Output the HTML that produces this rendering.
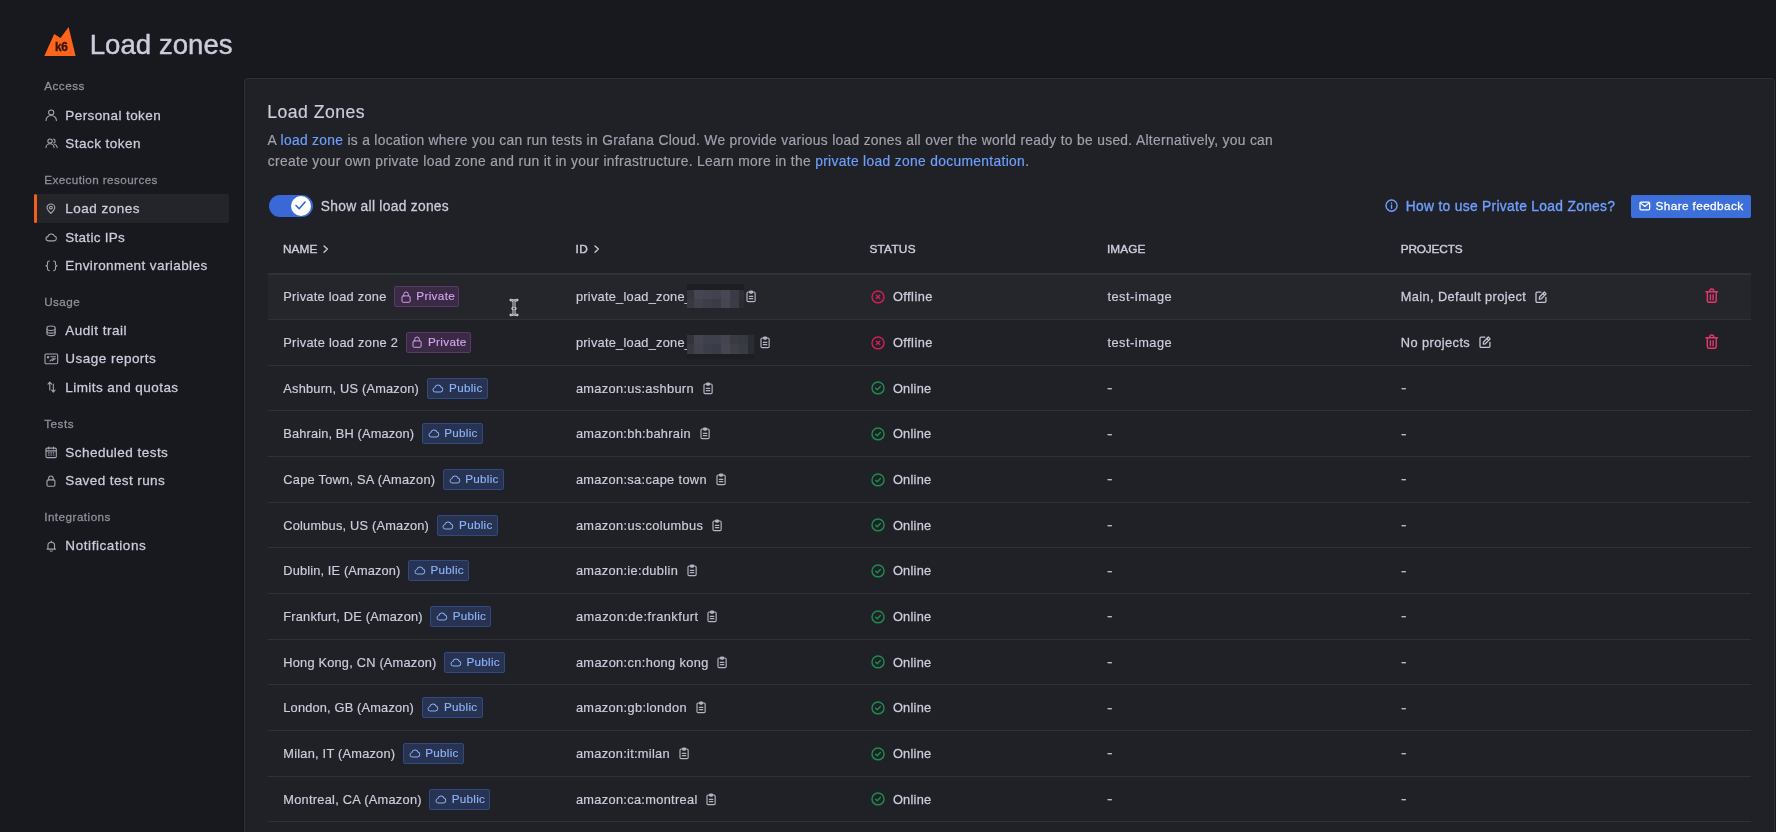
<!DOCTYPE html>
<html lang="en"><head><meta charset="utf-8"><title>Load zones</title><style>
html,body{margin:0;padding:0}
body{width:1776px;height:832px;overflow:hidden;background:#18191e;position:relative;font-family:'Liberation Sans', sans-serif;}
.wrap{position:absolute;left:0;top:0;width:1776px;height:832px;will-change:transform}
.t{position:absolute;white-space:pre;line-height:20px;font-family:'Liberation Sans', sans-serif;margin:0;padding:0;border:0;background:none;font-weight:400;text-decoration:none;display:block}
a{text-decoration:none}
.s0{-webkit-text-stroke:0.18px currentColor}
.lk{-webkit-text-stroke:0.36px currentColor}
.s1{-webkit-text-stroke:0.18px currentColor}
.s2{-webkit-text-stroke:0.45px currentColor}
.m{-webkit-text-stroke:0.26px currentColor}
.bt{-webkit-text-stroke:0.15px currentColor}
.h{-webkit-text-stroke:0.4px currentColor}
.b{position:absolute}
.i{position:absolute;overflow:visible}
</style></head>
<body>
<div class="wrap">
<main class="panel-wrap">
<section class="intro">
<div class="b panel" style="left:244.00px;top:78.00px;width:1531.00px;height:760.00px;background:#202126;border:1px solid #2e3035;border-radius:3px 3px 0 0;box-shadow:0 0 2px rgba(0,0,0,.35);box-sizing:border-box"></div>
<h2 id="t17" class="t s1" style="left:267.20px;top:102.00px;font-size:17.6px;color:#ccccdc;letter-spacing:0.506px;">Load Zones</h2>
<p class="t s0" style="left:267.60px;top:130.50px;font-size:13.8px;letter-spacing:0.321px;color:#a0a1ad">A <a href="#" style="color:#6e9fff">load zone</a> is a location where you can run tests in Grafana Cloud. We provide various load zones all over the world ready to be used. Alternatively, you can</p>
<p class="t s0" style="left:267.80px;top:151.50px;font-size:13.8px;letter-spacing:0.341px;color:#a0a1ad">create your own private load zone and run it in your infrastructure. Learn more in the <a href="#" style="color:#6e9fff">private load zone documentation</a>.</p>
</section>
<div class="toolbar">
<div class="b" style="left:268.50px;top:194.70px;width:44.50px;height:22.80px;background:#3a68d6;border-radius:12px"></div>
<div class="b" style="left:290.60px;top:195.90px;width:20.00px;height:20.00px;background:#fff;border-radius:50%"></div>
<svg class="i" style="left:296.00px;top:202.40px;color:#3462d0" width="9.10" height="6.70" viewBox="2.800 3.600 8.600 6.200" preserveAspectRatio="none" fill="none" stroke="#3462d0" stroke-width="1.6" stroke-linecap="round" stroke-linejoin="round"><path vector-effect="non-scaling-stroke" d="M2.800 6.800l3 3 5.600-6.200"/></svg>
<svg class="i" style="left:1385.60px;top:200.40px;color:#6e9fff" width="11.10" height="11.20" viewBox="2.500 2.500 19.000 19.000" preserveAspectRatio="none" fill="none" stroke="#6e9fff" stroke-width="1.4" stroke-linecap="round" stroke-linejoin="round"><circle vector-effect="non-scaling-stroke" cx="12" cy="12" r="9.500"/><path vector-effect="non-scaling-stroke" d="M12 11.200v5.300"/><path vector-effect="non-scaling-stroke" d="M12 7.600v.3"/></svg>
<div class="b" style="left:1631.00px;top:194.60px;width:120.20px;height:23.00px;background:#3d6fda;border-radius:2px"></div>
<svg class="i" style="left:1640.42px;top:202.12px;color:#ffffff" width="9.65" height="7.85" viewBox="2.500 4.500 19.000 15.000" preserveAspectRatio="none" fill="none" stroke="#ffffff" stroke-width="1.25" stroke-linecap="round" stroke-linejoin="round"><rect vector-effect="non-scaling-stroke" x="2.500" y="4.500" width="19" height="15" rx="2"/><path vector-effect="non-scaling-stroke" d="M3.500 6.200l8.500 6.800 8.500-6.800"/></svg>
<label id="t18" class="t m" style="left:320.80px;top:196.50px;font-size:13.8px;color:#ccccdc;letter-spacing:0.288px;">Show all load zones</label>
<a href="#" id="t19" class="t lk" style="left:1405.80px;top:196.50px;font-size:13.8px;color:#6e9fff;letter-spacing:0.311px;">How to use Private Load Zones?</a>
<button type="button" id="t20" class="t m" style="left:1655.50px;top:196.00px;font-size:11.8px;color:#ffffff;letter-spacing:0.383px;">Share feedback</button>
</div>
<div class="table" role="table">
<div class="thead" role="row">
<svg class="i" style="left:324.45px;top:246.35px;color:#ccccdc" width="3.40" height="6.20" viewBox="9.000 5.500 6.500 13.000" preserveAspectRatio="none" fill="none" stroke="#ccccdc" stroke-width="1.3" stroke-linecap="round" stroke-linejoin="round"><path vector-effect="non-scaling-stroke" d="M9 5.500l6.500 6.500-6.500 6.500"/></svg>
<svg class="i" style="left:594.85px;top:246.35px;color:#ccccdc" width="3.40" height="6.20" viewBox="9.000 5.500 6.500 13.000" preserveAspectRatio="none" fill="none" stroke="#ccccdc" stroke-width="1.3" stroke-linecap="round" stroke-linejoin="round"><path vector-effect="non-scaling-stroke" d="M9 5.500l6.500 6.500-6.500 6.500"/></svg>
<div class="b" style="left:268.00px;top:273.20px;width:1483.00px;height:1.50px;background:#303238"></div>
<span id="t21" class="t h" style="left:282.90px;top:239.00px;font-size:11.8px;color:#ccccdc;letter-spacing:0.127px;">NAME</span>
<span id="t22" class="t h" style="left:575.60px;top:239.00px;font-size:11.8px;color:#ccccdc;letter-spacing:0.294px;">ID</span>
<span id="t23" class="t h" style="left:869.40px;top:239.00px;font-size:11.8px;color:#ccccdc;letter-spacing:0.267px;">STATUS</span>
<span id="t24" class="t h" style="left:1106.90px;top:239.00px;font-size:11.8px;color:#ccccdc;letter-spacing:0.114px;">IMAGE</span>
<span id="t25" class="t h" style="left:1400.70px;top:239.00px;font-size:11.8px;color:#ccccdc;letter-spacing:-0.142px;">PROJECTS</span>
</div>
<div class="tr" role="row">
<div class="b" style="left:268.00px;top:274.50px;width:1483.00px;height:44.67px;background:#25262c"></div>
<div class="b" style="left:268.00px;top:318.97px;width:1483.00px;height:1.00px;background:#2f3136"></div>
<div class="b" style="left:394.20px;top:286.40px;width:65.20px;height:21.00px;background:#3a2a46;border:1px solid #563b66;border-radius:2px;box-sizing:border-box"></div>
<svg class="i" style="left:401.60px;top:291.60px;color:#cf9fe8" width="8.10" height="10.30" viewBox="4.500 3.000 15.000 18.500" preserveAspectRatio="none" fill="none" stroke="#cf9fe8" stroke-width="1.0" stroke-linecap="round" stroke-linejoin="round"><rect vector-effect="non-scaling-stroke" x="4.500" y="10" width="15" height="11.500" rx="2"/><path vector-effect="non-scaling-stroke" d="M7.800 10V7.200a4.200 4.200 0 0 1 8.400 0V10"/></svg>
<div class="b mos" style="left:0;top:0;filter:blur(0.6px);z-index:3"><div class="b" style="left:687.0px;top:289.60px;width:7.0px;height:9.35px;background:rgb(53, 54, 61)"></div><div class="b" style="left:693.8px;top:289.60px;width:9.3px;height:9.35px;background:rgb(69, 70, 81)"></div><div class="b" style="left:702.9px;top:289.60px;width:9.3px;height:9.35px;background:rgb(67, 68, 79)"></div><div class="b" style="left:712.0px;top:289.60px;width:9.3px;height:9.35px;background:rgb(65, 66, 77)"></div><div class="b" style="left:721.1px;top:289.60px;width:9.3px;height:9.35px;background:rgb(71, 72, 83)"></div><div class="b" style="left:730.2px;top:289.60px;width:9.3px;height:9.35px;background:rgb(57, 60, 70)"></div><div class="b" style="left:739.3px;top:289.60px;width:4.7px;height:9.35px;background:rgb(47, 48, 55)"></div><div class="b" style="left:687.0px;top:298.75px;width:7.0px;height:9.35px;background:rgb(55, 57, 65)"></div><div class="b" style="left:693.8px;top:298.75px;width:9.3px;height:9.35px;background:rgb(63, 65, 75)"></div><div class="b" style="left:702.9px;top:298.75px;width:9.3px;height:9.35px;background:rgb(59, 61, 71)"></div><div class="b" style="left:712.0px;top:298.75px;width:9.3px;height:9.35px;background:rgb(57, 60, 70)"></div><div class="b" style="left:721.1px;top:298.75px;width:9.3px;height:9.35px;background:rgb(69, 70, 81)"></div><div class="b" style="left:730.2px;top:298.75px;width:9.3px;height:9.35px;background:rgb(59, 61, 70)"></div><div class="b" style="left:739.3px;top:298.75px;width:4.7px;height:9.35px;background:rgb(43, 44, 51)"></div><div class="b" style="left:687.0px;top:284.40px;width:56.8px;height:5.2px;background:#1d1e22"></div></div>
<svg class="i" style="left:747.38px;top:291.37px;color:#b4b5c3" width="8.15" height="10.65" viewBox="5.000 2.600 14.000 19.400" preserveAspectRatio="none" fill="none" stroke="#b4b5c3" stroke-width="1.15" stroke-linecap="round" stroke-linejoin="round"><path vector-effect="non-scaling-stroke" d="M8.800 4.500H7a2 2 0 0 0-2 2V20a2 2 0 0 0 2 2h10a2 2 0 0 0 2-2V6.500a2 2 0 0 0-2-2h-1.800"/><rect vector-effect="non-scaling-stroke" x="9.300" y="2.600" width="5.400" height="3.800" rx="1.600" fill="currentColor"/><path vector-effect="non-scaling-stroke" d="M9 12.400h6M9 16.600h6"/></svg>
<svg class="i" style="left:871.83px;top:290.98px;color:#cc2055" width="12.05" height="11.85" viewBox="2.500 2.500 19.000 19.000" preserveAspectRatio="none" fill="none" stroke="#cc2055" stroke-width="1.45" stroke-linecap="round" stroke-linejoin="round"><circle vector-effect="non-scaling-stroke" cx="12" cy="12" r="9.500"/><path vector-effect="non-scaling-stroke" d="M9.300 9.300l5.400 5.400M14.700 9.300l-5.400 5.400"/></svg>
<svg class="i" style="left:1535.65px;top:291.75px;color:#c3c4d2" width="10.10" height="10.40" viewBox="3.000 2.900 18.300 18.100" preserveAspectRatio="none" fill="none" stroke="#c3c4d2" stroke-width="1.3" stroke-linecap="round" stroke-linejoin="round"><path vector-effect="non-scaling-stroke" d="M21 12.500V19a2 2 0 0 1-2 2H5a2 2 0 0 1-2-2V5a2 2 0 0 1 2-2h6.800"/><path vector-effect="non-scaling-stroke" d="M9 15.200l.5-3.700 8.600-8.600 3.200 3.200-8.600 8.600z"/><path vector-effect="non-scaling-stroke" d="M15.400 5.600l3.200 3.200"/></svg>
<svg class="i" style="left:1705.72px;top:289.02px;color:#e0386a" width="11.55" height="13.25" viewBox="2.500 3.500 19.000 18.500" preserveAspectRatio="none" fill="none" stroke="#e0386a" stroke-width="1.45" stroke-linecap="round" stroke-linejoin="round"><path vector-effect="non-scaling-stroke" d="M2.500 7.200h19"/><path vector-effect="non-scaling-stroke" d="M8.600 7.200a3.400 3.700 0 0 1 6.800 0"/><path vector-effect="non-scaling-stroke" d="M4.700 7.200v12.300a2.500 2.500 0 0 0 2.500 2.500h9.600a2.500 2.500 0 0 0 2.500-2.500V7.200"/><path vector-effect="non-scaling-stroke" d="M9.800 11.500v7M14.200 11.500v7"/></svg>
<span id="t26" class="t s0" style="left:283.30px;top:286.50px;font-size:12.8px;color:#ccccdc;letter-spacing:0.259px;">Private load zone</span>
<span id="t27" class="t bt" style="left:416.30px;top:285.50px;font-size:11.7px;color:#d2a4ea;letter-spacing:0.344px;">Private</span>
<span id="t28" class="t s0" style="left:575.90px;top:286.50px;font-size:12.8px;color:#ccccdc;letter-spacing:0.255px;">private_load_zone_</span>
<span id="t29" class="t m" style="left:892.90px;top:286.50px;font-size:12.8px;color:#ccccdc;letter-spacing:0.462px;">Offline</span>
<span id="t30" class="t s0" style="left:1107.40px;top:286.50px;font-size:12.8px;color:#ccccdc;letter-spacing:0.505px;">test-image</span>
<span id="t31" class="t m" style="left:1400.80px;top:286.50px;font-size:12.8px;color:#ccccdc;letter-spacing:0.383px;">Main, Default project</span>
</div>
<div class="tr" role="row">
<div class="b" style="left:268.00px;top:364.63px;width:1483.00px;height:1.00px;background:#2f3136"></div>
<div class="b" style="left:405.80px;top:332.07px;width:65.20px;height:21.00px;background:#3a2a46;border:1px solid #563b66;border-radius:2px;box-sizing:border-box"></div>
<svg class="i" style="left:413.20px;top:337.27px;color:#cf9fe8" width="8.10" height="10.30" viewBox="4.500 3.000 15.000 18.500" preserveAspectRatio="none" fill="none" stroke="#cf9fe8" stroke-width="1.0" stroke-linecap="round" stroke-linejoin="round"><rect vector-effect="non-scaling-stroke" x="4.500" y="10" width="15" height="11.500" rx="2"/><path vector-effect="non-scaling-stroke" d="M7.800 10V7.200a4.200 4.200 0 0 1 8.400 0V10"/></svg>
<div class="b mos" style="left:0;top:0;filter:blur(0.6px);z-index:3"><div class="b" style="left:687.0px;top:335.27px;width:7.0px;height:9.35px;background:rgb(51, 52, 59)"></div><div class="b" style="left:693.8px;top:335.27px;width:9.3px;height:9.35px;background:rgb(67, 68, 79)"></div><div class="b" style="left:702.9px;top:335.27px;width:9.3px;height:9.35px;background:rgb(63, 64, 75)"></div><div class="b" style="left:712.0px;top:335.27px;width:9.3px;height:9.35px;background:rgb(63, 64, 74)"></div><div class="b" style="left:721.1px;top:335.27px;width:9.3px;height:9.35px;background:rgb(67, 68, 79)"></div><div class="b" style="left:730.2px;top:335.27px;width:9.3px;height:9.35px;background:rgb(57, 58, 66)"></div><div class="b" style="left:739.3px;top:335.27px;width:9.3px;height:9.35px;background:rgb(55, 57, 65)"></div><div class="b" style="left:748.4px;top:335.27px;width:5.7px;height:9.35px;background:rgb(43, 44, 50)"></div><div class="b" style="left:687.0px;top:344.42px;width:7.0px;height:9.35px;background:rgb(55, 57, 65)"></div><div class="b" style="left:693.8px;top:344.42px;width:9.3px;height:9.35px;background:rgb(65, 66, 77)"></div><div class="b" style="left:702.9px;top:344.42px;width:9.3px;height:9.35px;background:rgb(59, 61, 71)"></div><div class="b" style="left:712.0px;top:344.42px;width:9.3px;height:9.35px;background:rgb(57, 60, 70)"></div><div class="b" style="left:721.1px;top:344.42px;width:9.3px;height:9.35px;background:rgb(69, 70, 81)"></div><div class="b" style="left:730.2px;top:344.42px;width:9.3px;height:9.35px;background:rgb(61, 63, 73)"></div><div class="b" style="left:739.3px;top:344.42px;width:9.3px;height:9.35px;background:rgb(57, 59, 68)"></div><div class="b" style="left:748.4px;top:344.42px;width:5.7px;height:9.35px;background:rgb(43, 44, 50)"></div><div class="b" style="left:687.0px;top:353.57px;width:66.9px;height:5.2px;background:#1d1e22"></div></div>
<svg class="i" style="left:760.78px;top:337.04px;color:#b4b5c3" width="8.15" height="10.65" viewBox="5.000 2.600 14.000 19.400" preserveAspectRatio="none" fill="none" stroke="#b4b5c3" stroke-width="1.15" stroke-linecap="round" stroke-linejoin="round"><path vector-effect="non-scaling-stroke" d="M8.800 4.500H7a2 2 0 0 0-2 2V20a2 2 0 0 0 2 2h10a2 2 0 0 0 2-2V6.500a2 2 0 0 0-2-2h-1.800"/><rect vector-effect="non-scaling-stroke" x="9.300" y="2.600" width="5.400" height="3.800" rx="1.600" fill="currentColor"/><path vector-effect="non-scaling-stroke" d="M9 12.400h6M9 16.600h6"/></svg>
<svg class="i" style="left:871.83px;top:336.64px;color:#cc2055" width="12.05" height="11.85" viewBox="2.500 2.500 19.000 19.000" preserveAspectRatio="none" fill="none" stroke="#cc2055" stroke-width="1.45" stroke-linecap="round" stroke-linejoin="round"><circle vector-effect="non-scaling-stroke" cx="12" cy="12" r="9.500"/><path vector-effect="non-scaling-stroke" d="M9.300 9.300l5.400 5.400M14.700 9.300l-5.400 5.400"/></svg>
<svg class="i" style="left:1479.65px;top:337.42px;color:#c3c4d2" width="10.10" height="10.40" viewBox="3.000 2.900 18.300 18.100" preserveAspectRatio="none" fill="none" stroke="#c3c4d2" stroke-width="1.3" stroke-linecap="round" stroke-linejoin="round"><path vector-effect="non-scaling-stroke" d="M21 12.500V19a2 2 0 0 1-2 2H5a2 2 0 0 1-2-2V5a2 2 0 0 1 2-2h6.800"/><path vector-effect="non-scaling-stroke" d="M9 15.200l.5-3.700 8.600-8.600 3.200 3.200-8.600 8.600z"/><path vector-effect="non-scaling-stroke" d="M15.400 5.600l3.200 3.200"/></svg>
<svg class="i" style="left:1705.72px;top:334.69px;color:#e0386a" width="11.55" height="13.25" viewBox="2.500 3.500 19.000 18.500" preserveAspectRatio="none" fill="none" stroke="#e0386a" stroke-width="1.45" stroke-linecap="round" stroke-linejoin="round"><path vector-effect="non-scaling-stroke" d="M2.500 7.200h19"/><path vector-effect="non-scaling-stroke" d="M8.600 7.200a3.400 3.700 0 0 1 6.800 0"/><path vector-effect="non-scaling-stroke" d="M4.700 7.200v12.300a2.500 2.500 0 0 0 2.500 2.500h9.600a2.500 2.500 0 0 0 2.500-2.500V7.200"/><path vector-effect="non-scaling-stroke" d="M9.800 11.500v7M14.200 11.500v7"/></svg>
<span id="t32" class="t s0" style="left:283.30px;top:332.50px;font-size:12.8px;color:#ccccdc;letter-spacing:0.281px;">Private load zone 2</span>
<span id="t33" class="t bt" style="left:427.90px;top:331.50px;font-size:11.7px;color:#d2a4ea;letter-spacing:0.344px;">Private</span>
<span id="t34" class="t s0" style="left:575.90px;top:332.50px;font-size:12.8px;color:#ccccdc;letter-spacing:0.255px;">private_load_zone_</span>
<span id="t35" class="t m" style="left:892.90px;top:332.50px;font-size:12.8px;color:#ccccdc;letter-spacing:0.462px;">Offline</span>
<span id="t36" class="t s0" style="left:1107.40px;top:332.50px;font-size:12.8px;color:#ccccdc;letter-spacing:0.505px;">test-image</span>
<span id="t37" class="t m" style="left:1400.80px;top:332.50px;font-size:12.8px;color:#ccccdc;letter-spacing:0.424px;">No projects</span>
</div>
<div class="tr" role="row">
<div class="b" style="left:268.00px;top:410.30px;width:1483.00px;height:1.00px;background:#2f3136"></div>
<div class="b" style="left:426.70px;top:377.73px;width:61.00px;height:21.00px;background:#273350;border:1px solid #2f4a80;border-radius:2px;box-sizing:border-box"></div>
<svg class="i" style="left:433.40px;top:384.73px;color:#86affb" width="9.80" height="6.90" viewBox="2.516 5.203 19.331 13.797" preserveAspectRatio="none" fill="none" stroke="#86affb" stroke-width="1.0" stroke-linecap="round" stroke-linejoin="round"><path vector-effect="non-scaling-stroke" d="M6.800 19a4.300 4.300 0 0 1-.7-8.540 6.300 6.300 0 0 1 12.100-1.200 5 5 0 0 1-.5 9.740z"/></svg>
<svg class="i" style="left:703.68px;top:382.71px;color:#b4b5c3" width="8.15" height="10.65" viewBox="5.000 2.600 14.000 19.400" preserveAspectRatio="none" fill="none" stroke="#b4b5c3" stroke-width="1.15" stroke-linecap="round" stroke-linejoin="round"><path vector-effect="non-scaling-stroke" d="M8.800 4.500H7a2 2 0 0 0-2 2V20a2 2 0 0 0 2 2h10a2 2 0 0 0 2-2V6.500a2 2 0 0 0-2-2h-1.800"/><rect vector-effect="non-scaling-stroke" x="9.300" y="2.600" width="5.400" height="3.800" rx="1.600" fill="currentColor"/><path vector-effect="non-scaling-stroke" d="M9 12.400h6M9 16.600h6"/></svg>
<svg class="i" style="left:871.83px;top:382.31px;color:#1d8a50" width="12.05" height="11.85" viewBox="2.500 2.500 19.000 19.000" preserveAspectRatio="none" fill="none" stroke="#1d8a50" stroke-width="1.45" stroke-linecap="round" stroke-linejoin="round"><circle vector-effect="non-scaling-stroke" cx="12" cy="12" r="9.500"/><path vector-effect="non-scaling-stroke" d="M8.300 12.400l2.500 2.500 4.900-5.200"/></svg>
<span id="t38" class="t s0" style="left:283.30px;top:378.50px;font-size:12.8px;color:#ccccdc;letter-spacing:0.211px;">Ashburn, US (Amazon)</span>
<span id="t39" class="t bt" style="left:449.10px;top:377.50px;font-size:11.7px;color:#8cb3fb;letter-spacing:0.259px;">Public</span>
<span id="t40" class="t s0" style="left:575.90px;top:378.50px;font-size:12.8px;color:#ccccdc;letter-spacing:0.329px;">amazon:us:ashburn</span>
<span id="t41" class="t m" style="left:892.90px;top:378.50px;font-size:12.8px;color:#ccccdc;letter-spacing:0.267px;">Online</span>
<span id="t42" class="t s1" style="left:1107.40px;top:377.50px;font-size:12.8px;color:#c2c2d2;transform:scaleX(1.3);transform-origin:0 50%;">-</span>
<span id="t43" class="t s1" style="left:1401.10px;top:377.50px;font-size:12.8px;color:#c2c2d2;transform:scaleX(1.3);transform-origin:0 50%;">-</span>
</div>
<div class="tr" role="row">
<div class="b" style="left:268.00px;top:455.97px;width:1483.00px;height:1.00px;background:#2f3136"></div>
<div class="b" style="left:421.90px;top:423.40px;width:61.00px;height:21.00px;background:#273350;border:1px solid #2f4a80;border-radius:2px;box-sizing:border-box"></div>
<svg class="i" style="left:428.60px;top:430.40px;color:#86affb" width="9.80" height="6.90" viewBox="2.516 5.203 19.331 13.797" preserveAspectRatio="none" fill="none" stroke="#86affb" stroke-width="1.0" stroke-linecap="round" stroke-linejoin="round"><path vector-effect="non-scaling-stroke" d="M6.800 19a4.300 4.300 0 0 1-.7-8.540 6.300 6.300 0 0 1 12.100-1.200 5 5 0 0 1-.5 9.740z"/></svg>
<svg class="i" style="left:700.68px;top:428.38px;color:#b4b5c3" width="8.15" height="10.65" viewBox="5.000 2.600 14.000 19.400" preserveAspectRatio="none" fill="none" stroke="#b4b5c3" stroke-width="1.15" stroke-linecap="round" stroke-linejoin="round"><path vector-effect="non-scaling-stroke" d="M8.800 4.500H7a2 2 0 0 0-2 2V20a2 2 0 0 0 2 2h10a2 2 0 0 0 2-2V6.500a2 2 0 0 0-2-2h-1.800"/><rect vector-effect="non-scaling-stroke" x="9.300" y="2.600" width="5.400" height="3.800" rx="1.600" fill="currentColor"/><path vector-effect="non-scaling-stroke" d="M9 12.400h6M9 16.600h6"/></svg>
<svg class="i" style="left:871.83px;top:427.98px;color:#1d8a50" width="12.05" height="11.85" viewBox="2.500 2.500 19.000 19.000" preserveAspectRatio="none" fill="none" stroke="#1d8a50" stroke-width="1.45" stroke-linecap="round" stroke-linejoin="round"><circle vector-effect="non-scaling-stroke" cx="12" cy="12" r="9.500"/><path vector-effect="non-scaling-stroke" d="M8.300 12.400l2.500 2.500 4.900-5.200"/></svg>
<span id="t44" class="t s0" style="left:283.30px;top:423.50px;font-size:12.8px;color:#ccccdc;letter-spacing:0.148px;">Bahrain, BH (Amazon)</span>
<span id="t45" class="t bt" style="left:444.30px;top:422.50px;font-size:11.7px;color:#8cb3fb;letter-spacing:0.259px;">Public</span>
<span id="t46" class="t s0" style="left:575.90px;top:423.50px;font-size:12.8px;color:#ccccdc;letter-spacing:0.320px;">amazon:bh:bahrain</span>
<span id="t47" class="t m" style="left:892.90px;top:423.50px;font-size:12.8px;color:#ccccdc;letter-spacing:0.267px;">Online</span>
<span id="t48" class="t s1" style="left:1107.40px;top:423.50px;font-size:12.8px;color:#c2c2d2;transform:scaleX(1.3);transform-origin:0 50%;">-</span>
<span id="t49" class="t s1" style="left:1401.10px;top:423.50px;font-size:12.8px;color:#c2c2d2;transform:scaleX(1.3);transform-origin:0 50%;">-</span>
</div>
<div class="tr" role="row">
<div class="b" style="left:268.00px;top:501.64px;width:1483.00px;height:1.00px;background:#2f3136"></div>
<div class="b" style="left:442.90px;top:469.07px;width:61.00px;height:21.00px;background:#273350;border:1px solid #2f4a80;border-radius:2px;box-sizing:border-box"></div>
<svg class="i" style="left:449.60px;top:476.07px;color:#86affb" width="9.80" height="6.90" viewBox="2.516 5.203 19.331 13.797" preserveAspectRatio="none" fill="none" stroke="#86affb" stroke-width="1.0" stroke-linecap="round" stroke-linejoin="round"><path vector-effect="non-scaling-stroke" d="M6.800 19a4.300 4.300 0 0 1-.7-8.540 6.300 6.300 0 0 1 12.100-1.200 5 5 0 0 1-.5 9.740z"/></svg>
<svg class="i" style="left:716.68px;top:474.04px;color:#b4b5c3" width="8.15" height="10.65" viewBox="5.000 2.600 14.000 19.400" preserveAspectRatio="none" fill="none" stroke="#b4b5c3" stroke-width="1.15" stroke-linecap="round" stroke-linejoin="round"><path vector-effect="non-scaling-stroke" d="M8.800 4.500H7a2 2 0 0 0-2 2V20a2 2 0 0 0 2 2h10a2 2 0 0 0 2-2V6.500a2 2 0 0 0-2-2h-1.800"/><rect vector-effect="non-scaling-stroke" x="9.300" y="2.600" width="5.400" height="3.800" rx="1.600" fill="currentColor"/><path vector-effect="non-scaling-stroke" d="M9 12.400h6M9 16.600h6"/></svg>
<svg class="i" style="left:871.83px;top:473.64px;color:#1d8a50" width="12.05" height="11.85" viewBox="2.500 2.500 19.000 19.000" preserveAspectRatio="none" fill="none" stroke="#1d8a50" stroke-width="1.45" stroke-linecap="round" stroke-linejoin="round"><circle vector-effect="non-scaling-stroke" cx="12" cy="12" r="9.500"/><path vector-effect="non-scaling-stroke" d="M8.300 12.400l2.500 2.500 4.900-5.200"/></svg>
<span id="t50" class="t s0" style="left:283.30px;top:469.50px;font-size:12.8px;color:#ccccdc;letter-spacing:0.259px;">Cape Town, SA (Amazon)</span>
<span id="t51" class="t bt" style="left:465.30px;top:468.50px;font-size:11.7px;color:#8cb3fb;letter-spacing:0.259px;">Public</span>
<span id="t52" class="t s0" style="left:575.90px;top:469.50px;font-size:12.8px;color:#ccccdc;letter-spacing:0.342px;">amazon:sa:cape town</span>
<span id="t53" class="t m" style="left:892.90px;top:469.50px;font-size:12.8px;color:#ccccdc;letter-spacing:0.267px;">Online</span>
<span id="t54" class="t s1" style="left:1107.40px;top:468.50px;font-size:12.8px;color:#c2c2d2;transform:scaleX(1.3);transform-origin:0 50%;">-</span>
<span id="t55" class="t s1" style="left:1401.10px;top:468.50px;font-size:12.8px;color:#c2c2d2;transform:scaleX(1.3);transform-origin:0 50%;">-</span>
</div>
<div class="tr" role="row">
<div class="b" style="left:268.00px;top:547.30px;width:1483.00px;height:1.00px;background:#2f3136"></div>
<div class="b" style="left:436.70px;top:514.74px;width:61.00px;height:21.00px;background:#273350;border:1px solid #2f4a80;border-radius:2px;box-sizing:border-box"></div>
<svg class="i" style="left:443.40px;top:521.74px;color:#86affb" width="9.80" height="6.90" viewBox="2.516 5.203 19.331 13.797" preserveAspectRatio="none" fill="none" stroke="#86affb" stroke-width="1.0" stroke-linecap="round" stroke-linejoin="round"><path vector-effect="non-scaling-stroke" d="M6.800 19a4.300 4.300 0 0 1-.7-8.540 6.300 6.300 0 0 1 12.100-1.200 5 5 0 0 1-.5 9.740z"/></svg>
<svg class="i" style="left:712.98px;top:519.71px;color:#b4b5c3" width="8.15" height="10.65" viewBox="5.000 2.600 14.000 19.400" preserveAspectRatio="none" fill="none" stroke="#b4b5c3" stroke-width="1.15" stroke-linecap="round" stroke-linejoin="round"><path vector-effect="non-scaling-stroke" d="M8.800 4.500H7a2 2 0 0 0-2 2V20a2 2 0 0 0 2 2h10a2 2 0 0 0 2-2V6.500a2 2 0 0 0-2-2h-1.800"/><rect vector-effect="non-scaling-stroke" x="9.300" y="2.600" width="5.400" height="3.800" rx="1.600" fill="currentColor"/><path vector-effect="non-scaling-stroke" d="M9 12.400h6M9 16.600h6"/></svg>
<svg class="i" style="left:871.83px;top:519.31px;color:#1d8a50" width="12.05" height="11.85" viewBox="2.500 2.500 19.000 19.000" preserveAspectRatio="none" fill="none" stroke="#1d8a50" stroke-width="1.45" stroke-linecap="round" stroke-linejoin="round"><circle vector-effect="non-scaling-stroke" cx="12" cy="12" r="9.500"/><path vector-effect="non-scaling-stroke" d="M8.300 12.400l2.500 2.500 4.900-5.200"/></svg>
<span id="t56" class="t s0" style="left:283.30px;top:515.50px;font-size:12.8px;color:#ccccdc;letter-spacing:0.203px;">Columbus, US (Amazon)</span>
<span id="t57" class="t bt" style="left:459.10px;top:514.50px;font-size:11.7px;color:#8cb3fb;letter-spacing:0.259px;">Public</span>
<span id="t58" class="t s0" style="left:575.90px;top:515.50px;font-size:12.8px;color:#ccccdc;letter-spacing:0.354px;">amazon:us:columbus</span>
<span id="t59" class="t m" style="left:892.90px;top:515.50px;font-size:12.8px;color:#ccccdc;letter-spacing:0.267px;">Online</span>
<span id="t60" class="t s1" style="left:1107.40px;top:514.50px;font-size:12.8px;color:#c2c2d2;transform:scaleX(1.3);transform-origin:0 50%;">-</span>
<span id="t61" class="t s1" style="left:1401.10px;top:514.50px;font-size:12.8px;color:#c2c2d2;transform:scaleX(1.3);transform-origin:0 50%;">-</span>
</div>
<div class="tr" role="row">
<div class="b" style="left:268.00px;top:592.97px;width:1483.00px;height:1.00px;background:#2f3136"></div>
<div class="b" style="left:408.10px;top:560.40px;width:61.00px;height:21.00px;background:#273350;border:1px solid #2f4a80;border-radius:2px;box-sizing:border-box"></div>
<svg class="i" style="left:414.80px;top:567.40px;color:#86affb" width="9.80" height="6.90" viewBox="2.516 5.203 19.331 13.797" preserveAspectRatio="none" fill="none" stroke="#86affb" stroke-width="1.0" stroke-linecap="round" stroke-linejoin="round"><path vector-effect="non-scaling-stroke" d="M6.800 19a4.300 4.300 0 0 1-.7-8.540 6.300 6.300 0 0 1 12.100-1.200 5 5 0 0 1-.5 9.740z"/></svg>
<svg class="i" style="left:687.88px;top:565.38px;color:#b4b5c3" width="8.15" height="10.65" viewBox="5.000 2.600 14.000 19.400" preserveAspectRatio="none" fill="none" stroke="#b4b5c3" stroke-width="1.15" stroke-linecap="round" stroke-linejoin="round"><path vector-effect="non-scaling-stroke" d="M8.800 4.500H7a2 2 0 0 0-2 2V20a2 2 0 0 0 2 2h10a2 2 0 0 0 2-2V6.500a2 2 0 0 0-2-2h-1.800"/><rect vector-effect="non-scaling-stroke" x="9.300" y="2.600" width="5.400" height="3.800" rx="1.600" fill="currentColor"/><path vector-effect="non-scaling-stroke" d="M9 12.400h6M9 16.600h6"/></svg>
<svg class="i" style="left:871.83px;top:564.98px;color:#1d8a50" width="12.05" height="11.85" viewBox="2.500 2.500 19.000 19.000" preserveAspectRatio="none" fill="none" stroke="#1d8a50" stroke-width="1.45" stroke-linecap="round" stroke-linejoin="round"><circle vector-effect="non-scaling-stroke" cx="12" cy="12" r="9.500"/><path vector-effect="non-scaling-stroke" d="M8.300 12.400l2.500 2.500 4.900-5.200"/></svg>
<span id="t62" class="t s0" style="left:283.30px;top:560.50px;font-size:12.8px;color:#ccccdc;letter-spacing:0.141px;">Dublin, IE (Amazon)</span>
<span id="t63" class="t bt" style="left:430.50px;top:559.50px;font-size:11.7px;color:#8cb3fb;letter-spacing:0.259px;">Public</span>
<span id="t64" class="t s0" style="left:575.90px;top:560.50px;font-size:12.8px;color:#ccccdc;letter-spacing:0.340px;">amazon:ie:dublin</span>
<span id="t65" class="t m" style="left:892.90px;top:560.50px;font-size:12.8px;color:#ccccdc;letter-spacing:0.267px;">Online</span>
<span id="t66" class="t s1" style="left:1107.40px;top:560.50px;font-size:12.8px;color:#c2c2d2;transform:scaleX(1.3);transform-origin:0 50%;">-</span>
<span id="t67" class="t s1" style="left:1401.10px;top:560.50px;font-size:12.8px;color:#c2c2d2;transform:scaleX(1.3);transform-origin:0 50%;">-</span>
</div>
<div class="tr" role="row">
<div class="b" style="left:268.00px;top:638.64px;width:1483.00px;height:1.00px;background:#2f3136"></div>
<div class="b" style="left:430.40px;top:606.07px;width:61.00px;height:21.00px;background:#273350;border:1px solid #2f4a80;border-radius:2px;box-sizing:border-box"></div>
<svg class="i" style="left:437.10px;top:613.07px;color:#86affb" width="9.80" height="6.90" viewBox="2.516 5.203 19.331 13.797" preserveAspectRatio="none" fill="none" stroke="#86affb" stroke-width="1.0" stroke-linecap="round" stroke-linejoin="round"><path vector-effect="non-scaling-stroke" d="M6.800 19a4.300 4.300 0 0 1-.7-8.540 6.300 6.300 0 0 1 12.100-1.200 5 5 0 0 1-.5 9.740z"/></svg>
<svg class="i" style="left:708.38px;top:611.04px;color:#b4b5c3" width="8.15" height="10.65" viewBox="5.000 2.600 14.000 19.400" preserveAspectRatio="none" fill="none" stroke="#b4b5c3" stroke-width="1.15" stroke-linecap="round" stroke-linejoin="round"><path vector-effect="non-scaling-stroke" d="M8.800 4.500H7a2 2 0 0 0-2 2V20a2 2 0 0 0 2 2h10a2 2 0 0 0 2-2V6.500a2 2 0 0 0-2-2h-1.800"/><rect vector-effect="non-scaling-stroke" x="9.300" y="2.600" width="5.400" height="3.800" rx="1.600" fill="currentColor"/><path vector-effect="non-scaling-stroke" d="M9 12.400h6M9 16.600h6"/></svg>
<svg class="i" style="left:871.83px;top:610.64px;color:#1d8a50" width="12.05" height="11.85" viewBox="2.500 2.500 19.000 19.000" preserveAspectRatio="none" fill="none" stroke="#1d8a50" stroke-width="1.45" stroke-linecap="round" stroke-linejoin="round"><circle vector-effect="non-scaling-stroke" cx="12" cy="12" r="9.500"/><path vector-effect="non-scaling-stroke" d="M8.300 12.400l2.500 2.500 4.900-5.200"/></svg>
<span id="t68" class="t s0" style="left:283.30px;top:606.50px;font-size:12.8px;color:#ccccdc;letter-spacing:0.199px;">Frankfurt, DE (Amazon)</span>
<span id="t69" class="t bt" style="left:452.80px;top:605.50px;font-size:11.7px;color:#8cb3fb;letter-spacing:0.259px;">Public</span>
<span id="t70" class="t s0" style="left:575.90px;top:606.50px;font-size:12.8px;color:#ccccdc;letter-spacing:0.468px;">amazon:de:frankfurt</span>
<span id="t71" class="t m" style="left:892.90px;top:606.50px;font-size:12.8px;color:#ccccdc;letter-spacing:0.267px;">Online</span>
<span id="t72" class="t s1" style="left:1107.40px;top:605.50px;font-size:12.8px;color:#c2c2d2;transform:scaleX(1.3);transform-origin:0 50%;">-</span>
<span id="t73" class="t s1" style="left:1401.10px;top:605.50px;font-size:12.8px;color:#c2c2d2;transform:scaleX(1.3);transform-origin:0 50%;">-</span>
</div>
<div class="tr" role="row">
<div class="b" style="left:268.00px;top:684.30px;width:1483.00px;height:1.00px;background:#2f3136"></div>
<div class="b" style="left:444.10px;top:651.74px;width:61.00px;height:21.00px;background:#273350;border:1px solid #2f4a80;border-radius:2px;box-sizing:border-box"></div>
<svg class="i" style="left:450.80px;top:658.74px;color:#86affb" width="9.80" height="6.90" viewBox="2.516 5.203 19.331 13.797" preserveAspectRatio="none" fill="none" stroke="#86affb" stroke-width="1.0" stroke-linecap="round" stroke-linejoin="round"><path vector-effect="non-scaling-stroke" d="M6.800 19a4.300 4.300 0 0 1-.7-8.540 6.300 6.300 0 0 1 12.100-1.200 5 5 0 0 1-.5 9.740z"/></svg>
<svg class="i" style="left:718.48px;top:656.71px;color:#b4b5c3" width="8.15" height="10.65" viewBox="5.000 2.600 14.000 19.400" preserveAspectRatio="none" fill="none" stroke="#b4b5c3" stroke-width="1.15" stroke-linecap="round" stroke-linejoin="round"><path vector-effect="non-scaling-stroke" d="M8.800 4.500H7a2 2 0 0 0-2 2V20a2 2 0 0 0 2 2h10a2 2 0 0 0 2-2V6.500a2 2 0 0 0-2-2h-1.800"/><rect vector-effect="non-scaling-stroke" x="9.300" y="2.600" width="5.400" height="3.800" rx="1.600" fill="currentColor"/><path vector-effect="non-scaling-stroke" d="M9 12.400h6M9 16.600h6"/></svg>
<svg class="i" style="left:871.83px;top:656.31px;color:#1d8a50" width="12.05" height="11.85" viewBox="2.500 2.500 19.000 19.000" preserveAspectRatio="none" fill="none" stroke="#1d8a50" stroke-width="1.45" stroke-linecap="round" stroke-linejoin="round"><circle vector-effect="non-scaling-stroke" cx="12" cy="12" r="9.500"/><path vector-effect="non-scaling-stroke" d="M8.300 12.400l2.500 2.500 4.900-5.200"/></svg>
<span id="t74" class="t s0" style="left:283.30px;top:652.50px;font-size:12.8px;color:#ccccdc;letter-spacing:0.207px;">Hong Kong, CN (Amazon)</span>
<span id="t75" class="t bt" style="left:466.50px;top:651.50px;font-size:11.7px;color:#8cb3fb;letter-spacing:0.259px;">Public</span>
<span id="t76" class="t s0" style="left:575.90px;top:652.50px;font-size:12.8px;color:#ccccdc;letter-spacing:0.361px;">amazon:cn:hong kong</span>
<span id="t77" class="t m" style="left:892.90px;top:652.50px;font-size:12.8px;color:#ccccdc;letter-spacing:0.267px;">Online</span>
<span id="t78" class="t s1" style="left:1107.40px;top:651.50px;font-size:12.8px;color:#c2c2d2;transform:scaleX(1.3);transform-origin:0 50%;">-</span>
<span id="t79" class="t s1" style="left:1401.10px;top:651.50px;font-size:12.8px;color:#c2c2d2;transform:scaleX(1.3);transform-origin:0 50%;">-</span>
</div>
<div class="tr" role="row">
<div class="b" style="left:268.00px;top:729.97px;width:1483.00px;height:1.00px;background:#2f3136"></div>
<div class="b" style="left:421.60px;top:697.40px;width:61.00px;height:21.00px;background:#273350;border:1px solid #2f4a80;border-radius:2px;box-sizing:border-box"></div>
<svg class="i" style="left:428.30px;top:704.40px;color:#86affb" width="9.80" height="6.90" viewBox="2.516 5.203 19.331 13.797" preserveAspectRatio="none" fill="none" stroke="#86affb" stroke-width="1.0" stroke-linecap="round" stroke-linejoin="round"><path vector-effect="non-scaling-stroke" d="M6.800 19a4.300 4.300 0 0 1-.7-8.540 6.300 6.300 0 0 1 12.100-1.200 5 5 0 0 1-.5 9.740z"/></svg>
<svg class="i" style="left:696.68px;top:702.38px;color:#b4b5c3" width="8.15" height="10.65" viewBox="5.000 2.600 14.000 19.400" preserveAspectRatio="none" fill="none" stroke="#b4b5c3" stroke-width="1.15" stroke-linecap="round" stroke-linejoin="round"><path vector-effect="non-scaling-stroke" d="M8.800 4.500H7a2 2 0 0 0-2 2V20a2 2 0 0 0 2 2h10a2 2 0 0 0 2-2V6.500a2 2 0 0 0-2-2h-1.800"/><rect vector-effect="non-scaling-stroke" x="9.300" y="2.600" width="5.400" height="3.800" rx="1.600" fill="currentColor"/><path vector-effect="non-scaling-stroke" d="M9 12.400h6M9 16.600h6"/></svg>
<svg class="i" style="left:871.83px;top:701.98px;color:#1d8a50" width="12.05" height="11.85" viewBox="2.500 2.500 19.000 19.000" preserveAspectRatio="none" fill="none" stroke="#1d8a50" stroke-width="1.45" stroke-linecap="round" stroke-linejoin="round"><circle vector-effect="non-scaling-stroke" cx="12" cy="12" r="9.500"/><path vector-effect="non-scaling-stroke" d="M8.300 12.400l2.500 2.500 4.900-5.200"/></svg>
<span id="t80" class="t s0" style="left:283.30px;top:697.50px;font-size:12.8px;color:#ccccdc;letter-spacing:0.177px;">London, GB (Amazon)</span>
<span id="t81" class="t bt" style="left:444.00px;top:696.50px;font-size:11.7px;color:#8cb3fb;letter-spacing:0.259px;">Public</span>
<span id="t82" class="t s0" style="left:575.90px;top:697.50px;font-size:12.8px;color:#ccccdc;letter-spacing:0.355px;">amazon:gb:london</span>
<span id="t83" class="t m" style="left:892.90px;top:697.50px;font-size:12.8px;color:#ccccdc;letter-spacing:0.267px;">Online</span>
<span id="t84" class="t s1" style="left:1107.40px;top:697.50px;font-size:12.8px;color:#c2c2d2;transform:scaleX(1.3);transform-origin:0 50%;">-</span>
<span id="t85" class="t s1" style="left:1401.10px;top:697.50px;font-size:12.8px;color:#c2c2d2;transform:scaleX(1.3);transform-origin:0 50%;">-</span>
</div>
<div class="tr" role="row">
<div class="b" style="left:268.00px;top:775.64px;width:1483.00px;height:1.00px;background:#2f3136"></div>
<div class="b" style="left:402.90px;top:743.07px;width:61.00px;height:21.00px;background:#273350;border:1px solid #2f4a80;border-radius:2px;box-sizing:border-box"></div>
<svg class="i" style="left:409.60px;top:750.07px;color:#86affb" width="9.80" height="6.90" viewBox="2.516 5.203 19.331 13.797" preserveAspectRatio="none" fill="none" stroke="#86affb" stroke-width="1.0" stroke-linecap="round" stroke-linejoin="round"><path vector-effect="non-scaling-stroke" d="M6.800 19a4.300 4.300 0 0 1-.7-8.540 6.300 6.300 0 0 1 12.100-1.200 5 5 0 0 1-.5 9.740z"/></svg>
<svg class="i" style="left:679.68px;top:748.05px;color:#b4b5c3" width="8.15" height="10.65" viewBox="5.000 2.600 14.000 19.400" preserveAspectRatio="none" fill="none" stroke="#b4b5c3" stroke-width="1.15" stroke-linecap="round" stroke-linejoin="round"><path vector-effect="non-scaling-stroke" d="M8.800 4.500H7a2 2 0 0 0-2 2V20a2 2 0 0 0 2 2h10a2 2 0 0 0 2-2V6.500a2 2 0 0 0-2-2h-1.800"/><rect vector-effect="non-scaling-stroke" x="9.300" y="2.600" width="5.400" height="3.800" rx="1.600" fill="currentColor"/><path vector-effect="non-scaling-stroke" d="M9 12.400h6M9 16.600h6"/></svg>
<svg class="i" style="left:871.83px;top:747.65px;color:#1d8a50" width="12.05" height="11.85" viewBox="2.500 2.500 19.000 19.000" preserveAspectRatio="none" fill="none" stroke="#1d8a50" stroke-width="1.45" stroke-linecap="round" stroke-linejoin="round"><circle vector-effect="non-scaling-stroke" cx="12" cy="12" r="9.500"/><path vector-effect="non-scaling-stroke" d="M8.300 12.400l2.500 2.500 4.900-5.200"/></svg>
<span id="t86" class="t s0" style="left:283.30px;top:743.50px;font-size:12.8px;color:#ccccdc;letter-spacing:0.230px;">Milan, IT (Amazon)</span>
<span id="t87" class="t bt" style="left:425.30px;top:742.50px;font-size:11.7px;color:#8cb3fb;letter-spacing:0.259px;">Public</span>
<span id="t88" class="t s0" style="left:575.90px;top:743.50px;font-size:12.8px;color:#ccccdc;letter-spacing:0.292px;">amazon:it:milan</span>
<span id="t89" class="t m" style="left:892.90px;top:743.50px;font-size:12.8px;color:#ccccdc;letter-spacing:0.267px;">Online</span>
<span id="t90" class="t s1" style="left:1107.40px;top:742.50px;font-size:12.8px;color:#c2c2d2;transform:scaleX(1.3);transform-origin:0 50%;">-</span>
<span id="t91" class="t s1" style="left:1401.10px;top:742.50px;font-size:12.8px;color:#c2c2d2;transform:scaleX(1.3);transform-origin:0 50%;">-</span>
</div>
<div class="tr" role="row">
<div class="b" style="left:268.00px;top:821.30px;width:1483.00px;height:1.00px;background:#2f3136"></div>
<div class="b" style="left:429.40px;top:788.74px;width:61.00px;height:21.00px;background:#273350;border:1px solid #2f4a80;border-radius:2px;box-sizing:border-box"></div>
<svg class="i" style="left:436.10px;top:795.74px;color:#86affb" width="9.80" height="6.90" viewBox="2.516 5.203 19.331 13.797" preserveAspectRatio="none" fill="none" stroke="#86affb" stroke-width="1.0" stroke-linecap="round" stroke-linejoin="round"><path vector-effect="non-scaling-stroke" d="M6.800 19a4.300 4.300 0 0 1-.7-8.540 6.300 6.300 0 0 1 12.100-1.200 5 5 0 0 1-.5 9.740z"/></svg>
<svg class="i" style="left:707.38px;top:793.71px;color:#b4b5c3" width="8.15" height="10.65" viewBox="5.000 2.600 14.000 19.400" preserveAspectRatio="none" fill="none" stroke="#b4b5c3" stroke-width="1.15" stroke-linecap="round" stroke-linejoin="round"><path vector-effect="non-scaling-stroke" d="M8.800 4.500H7a2 2 0 0 0-2 2V20a2 2 0 0 0 2 2h10a2 2 0 0 0 2-2V6.500a2 2 0 0 0-2-2h-1.800"/><rect vector-effect="non-scaling-stroke" x="9.300" y="2.600" width="5.400" height="3.800" rx="1.600" fill="currentColor"/><path vector-effect="non-scaling-stroke" d="M9 12.400h6M9 16.600h6"/></svg>
<svg class="i" style="left:871.83px;top:793.31px;color:#1d8a50" width="12.05" height="11.85" viewBox="2.500 2.500 19.000 19.000" preserveAspectRatio="none" fill="none" stroke="#1d8a50" stroke-width="1.45" stroke-linecap="round" stroke-linejoin="round"><circle vector-effect="non-scaling-stroke" cx="12" cy="12" r="9.500"/><path vector-effect="non-scaling-stroke" d="M8.300 12.400l2.500 2.500 4.900-5.200"/></svg>
<span id="t92" class="t s0" style="left:283.30px;top:789.50px;font-size:12.8px;color:#ccccdc;letter-spacing:0.262px;">Montreal, CA (Amazon)</span>
<span id="t93" class="t bt" style="left:451.80px;top:788.50px;font-size:11.7px;color:#8cb3fb;letter-spacing:0.259px;">Public</span>
<span id="t94" class="t s0" style="left:575.90px;top:789.50px;font-size:12.8px;color:#ccccdc;letter-spacing:0.319px;">amazon:ca:montreal</span>
<span id="t95" class="t m" style="left:892.90px;top:789.50px;font-size:12.8px;color:#ccccdc;letter-spacing:0.267px;">Online</span>
<span id="t96" class="t s1" style="left:1107.40px;top:788.50px;font-size:12.8px;color:#c2c2d2;transform:scaleX(1.3);transform-origin:0 50%;">-</span>
<span id="t97" class="t s1" style="left:1401.10px;top:788.50px;font-size:12.8px;color:#c2c2d2;transform:scaleX(1.3);transform-origin:0 50%;">-</span>
</div>
</div>
</main>
<header>
<svg class="i" style="left:44px;top:26px" width="33" height="31" viewBox="0 0 33 31"><path d="M0.300 30.100L10.200 8.100 16.500 11.900 24.600 1.100 31.600 30.100z" fill="#fd651c"/><text x="10.900" y="24.500" font-family="'Liberation Sans',sans-serif" font-weight="700" font-size="11.900" fill="#35140a" stroke="#35140a" stroke-width="0.350" letter-spacing="-0.350">k6</text></svg>
<h1 id="t0" class="t s2" style="left:89.70px;top:34.50px;font-size:27.6px;color:#ccccdc;letter-spacing:0.031px;">Load zones</h1>
</header>
<nav>
<svg class="i" style="left:45.95px;top:109.95px;color:#a4a5b2" width="10.40" height="10.40" viewBox="4.000 4.000 16.000 17.000" preserveAspectRatio="none" fill="none" stroke="#a4a5b2" stroke-width="1.1" stroke-linecap="round" stroke-linejoin="round"><circle vector-effect="non-scaling-stroke" cx="12" cy="8" r="4"/><path vector-effect="non-scaling-stroke" d="M4 21a8 8 0 0 1 16 0"/></svg>
<svg class="i" style="left:45.55px;top:139.45px;color:#a4a5b2" width="11.20" height="8.60" viewBox="2.500 4.700 19.500 15.800" preserveAspectRatio="none" fill="none" stroke="#a4a5b2" stroke-width="1.1" stroke-linecap="round" stroke-linejoin="round"><circle vector-effect="non-scaling-stroke" cx="9.500" cy="8.500" r="3.800"/><path vector-effect="non-scaling-stroke" d="M2.500 20.500a7 7 0 0 1 14 0"/><path vector-effect="non-scaling-stroke" d="M15.300 4.800a3.800 3.800 0 0 1 .9 7.200"/><path vector-effect="non-scaling-stroke" d="M17.500 14.200a7 7 0 0 1 4.500 6.300"/></svg>
<div class="b" style="left:34.00px;top:194.05px;width:194.80px;height:28.50px;background:#24252b;border-radius:2px"></div>
<div class="b" style="left:34.00px;top:194.05px;width:3.40px;height:28.50px;background:#f55f1e;border-radius:2px"></div>
<svg class="i" style="left:47.05px;top:203.75px;color:#a4a5b2" width="7.80" height="9.45" viewBox="5.000 3.000 14.000 18.500" preserveAspectRatio="none" fill="none" stroke="#a4a5b2" stroke-width="1.1" stroke-linecap="round" stroke-linejoin="round"><path vector-effect="non-scaling-stroke" d="M12 21.500c4-4.200 7-7.700 7-11.500a7 7 0 0 0-14 0c0 3.800 3 7.300 7 11.500z"/><circle vector-effect="non-scaling-stroke" cx="12" cy="10" r="2.600"/></svg>
<svg class="i" style="left:45.85px;top:233.55px;color:#a4a5b2" width="10.40" height="6.90" viewBox="2.516 5.203 19.331 13.797" preserveAspectRatio="none" fill="none" stroke="#a4a5b2" stroke-width="1.1" stroke-linecap="round" stroke-linejoin="round"><path vector-effect="non-scaling-stroke" d="M6.800 19a4.300 4.300 0 0 1-.7-8.540 6.300 6.300 0 0 1 12.100-1.200 5 5 0 0 1-.5 9.740z"/></svg>
<svg class="i" style="left:45.55px;top:260.75px;color:#a4a5b2" width="11.00" height="9.70" viewBox="3.000 3.000 18.000 18.000" preserveAspectRatio="none" fill="none" stroke="#a4a5b2" stroke-width="1.1" stroke-linecap="round" stroke-linejoin="round"><path vector-effect="non-scaling-stroke" d="M8.500 3c-2.300 0-3 1-3 3v3.200c0 1.600-.7 2.600-2.500 2.800 1.800.2 2.500 1.200 2.500 2.800v3.200c0 2 .7 3 3 3"/><path vector-effect="non-scaling-stroke" d="M15.500 3c2.300 0 3 1 3 3v3.200c0 1.600.7 2.600 2.500 2.800-1.800.2-2.500 1.200-2.500 2.800v3.200c0 2-.7 3-3 3"/></svg>
<svg class="i" style="left:46.75px;top:325.75px;color:#a4a5b2" width="8.10" height="9.60" viewBox="5.000 3.000 14.000 18.000" preserveAspectRatio="none" fill="none" stroke="#a4a5b2" stroke-width="1.1" stroke-linecap="round" stroke-linejoin="round"><path vector-effect="non-scaling-stroke" d="M5 6.200c0-1.800 3.130-3.200 7-3.200s7 1.400 7 3.200v11.600c0 1.800-3.130 3.200-7 3.200s-7-1.400-7-3.200z"/><path vector-effect="non-scaling-stroke" d="M5 8.800c0 1.500 3.130 2.700 7 2.700s7-1.200 7-2.700"/><path vector-effect="non-scaling-stroke" d="M5 13.600c0 1.500 3.130 2.700 7 2.700s7-1.200 7-2.700"/></svg>
<svg class="i" style="left:44.75px;top:354.15px;color:#a4a5b2" width="12.70" height="9.80" viewBox="1.000 4.000 22.000 16.000" preserveAspectRatio="none" fill="none" stroke="#a4a5b2" stroke-width="1.1" stroke-linecap="round" stroke-linejoin="round"><rect vector-effect="non-scaling-stroke" x="1" y="4" width="22" height="16" rx="2"/><circle vector-effect="non-scaling-stroke" cx="6.300" cy="9.300" r="1.100"/><path vector-effect="non-scaling-stroke" d="M11 8.500h8M14 11.800h5M9.500 15.500l2.500-2.200 2.400 1.200 3-2.200"/></svg>
<svg class="i" style="left:47.55px;top:382.45px;color:#a4a5b2" width="7.10" height="10.10" viewBox="5.000 3.500 14.000 17.000" preserveAspectRatio="none" fill="none" stroke="#a4a5b2" stroke-width="1.1" stroke-linecap="round" stroke-linejoin="round"><path vector-effect="non-scaling-stroke" d="M8.500 17V3.500M5 7l3.500-3.500L12 7"/><path vector-effect="non-scaling-stroke" d="M15.500 7v13.500M12 17l3.500 3.500L19 17"/></svg>
<svg class="i" style="left:45.85px;top:446.85px;color:#a4a5b2" width="10.30" height="10.60" viewBox="3.000 2.500 18.000 18.500" preserveAspectRatio="none" fill="none" stroke="#a4a5b2" stroke-width="1.1" stroke-linecap="round" stroke-linejoin="round"><rect vector-effect="non-scaling-stroke" x="3" y="4.500" width="18" height="16.500" rx="2"/><path vector-effect="non-scaling-stroke" d="M3 9.200h18M7.800 2.500v3.600M16.200 2.500v3.600"/><path vector-effect="non-scaling-stroke" d="M7.200 12.800h1.200M11.400 12.800h1.200M15.600 12.800h1.200M7.200 16.600h1.200M11.400 16.600h1.200M15.600 16.600h1.200"/></svg>
<svg class="i" style="left:47.05px;top:475.85px;color:#a4a5b2" width="7.90" height="10.20" viewBox="4.500 3.000 15.000 18.500" preserveAspectRatio="none" fill="none" stroke="#a4a5b2" stroke-width="1.1" stroke-linecap="round" stroke-linejoin="round"><rect vector-effect="non-scaling-stroke" x="4.500" y="10" width="15" height="11.500" rx="2"/><path vector-effect="non-scaling-stroke" d="M7.800 10V7.200a4.200 4.200 0 0 1 8.400 0V10"/></svg>
<svg class="i" style="left:46.75px;top:541.25px;color:#a4a5b2" width="8.50" height="10.20" viewBox="4.500 3.200 15.000 18.900" preserveAspectRatio="none" fill="none" stroke="#a4a5b2" stroke-width="1.1" stroke-linecap="round" stroke-linejoin="round"><path vector-effect="non-scaling-stroke" d="M6.200 17V11.300a5.800 5.800 0 0 1 11.600 0V17l1.700 1.200H4.500z"/><path vector-effect="non-scaling-stroke" d="M10 21.500q2 1.200 4 0"/><path vector-effect="non-scaling-stroke" d="M12 3.200v2"/></svg>
<span id="t1" class="t m" style="left:44.20px;top:75.50px;font-size:11.7px;color:#8f909c;letter-spacing:0.521px;">Access</span>
<a href="#" id="t2" class="t m" style="left:65.30px;top:105.50px;font-size:13.5px;color:#ccccdc;letter-spacing:0.410px;">Personal token</a>
<a href="#" id="t3" class="t m" style="left:65.30px;top:133.50px;font-size:13.5px;color:#ccccdc;letter-spacing:0.459px;">Stack token</a>
<span id="t4" class="t m" style="left:44.20px;top:169.50px;font-size:11.7px;color:#8f909c;letter-spacing:0.406px;">Execution resources</span>
<a href="#" id="t5" class="t m" style="left:65.30px;top:198.50px;font-size:13.5px;color:#ccccdc;letter-spacing:0.499px;">Load zones</a>
<a href="#" id="t6" class="t m" style="left:65.30px;top:227.50px;font-size:13.5px;color:#ccccdc;letter-spacing:0.267px;">Static IPs</a>
<a href="#" id="t7" class="t m" style="left:65.30px;top:255.50px;font-size:13.5px;color:#ccccdc;letter-spacing:0.415px;">Environment variables</a>
<span id="t8" class="t m" style="left:44.20px;top:291.50px;font-size:11.7px;color:#8f909c;letter-spacing:0.421px;">Usage</span>
<a href="#" id="t9" class="t m" style="left:65.30px;top:320.50px;font-size:13.5px;color:#ccccdc;letter-spacing:0.484px;">Audit trail</a>
<a href="#" id="t10" class="t m" style="left:65.30px;top:348.50px;font-size:13.5px;color:#ccccdc;letter-spacing:0.477px;">Usage reports</a>
<a href="#" id="t11" class="t m" style="left:65.30px;top:377.50px;font-size:13.5px;color:#ccccdc;letter-spacing:0.435px;">Limits and quotas</a>
<span id="t12" class="t m" style="left:44.20px;top:413.50px;font-size:11.7px;color:#8f909c;letter-spacing:0.544px;">Tests</span>
<a href="#" id="t13" class="t m" style="left:65.30px;top:442.50px;font-size:13.5px;color:#ccccdc;letter-spacing:0.463px;">Scheduled tests</a>
<a href="#" id="t14" class="t m" style="left:65.30px;top:470.50px;font-size:13.5px;color:#ccccdc;letter-spacing:0.406px;">Saved test runs</a>
<span id="t15" class="t m" style="left:44.20px;top:506.50px;font-size:11.7px;color:#8f909c;letter-spacing:0.468px;">Integrations</span>
<a href="#" id="t16" class="t m" style="left:65.30px;top:535.50px;font-size:13.5px;color:#ccccdc;letter-spacing:0.581px;">Notifications</a>
</nav>
<svg class="i" style="left:509px;top:298px" width="10" height="19" viewBox="0 0 10 19" fill="none" stroke-linecap="round" stroke-linejoin="round"><path d="M1.800 1.900q2.200 0 3.200 1.500 1-1.500 3.200-1.500M1.800 17.100q2.200 0 3.200-1.500 1 1.500 3.200 1.500" stroke="#f4f4f7" stroke-width="2.500"/><path d="M5 3.600v11.800" stroke="#a9aab3" stroke-width="3.400" stroke-linecap="butt"/><path d="M3.600 10.500h2.800" stroke="#e8e8ee" stroke-width="2.400"/><path d="M1.800 1.900q2.200 0 3.200 1.500 1-1.500 3.200-1.500M1.800 17.100q2.200 0 3.200-1.500 1 1.500 3.200 1.500M5 3.600v11.800M4 10.500h2" stroke="#26262c" stroke-width=".7"/></svg>
</div>
</body></html>
